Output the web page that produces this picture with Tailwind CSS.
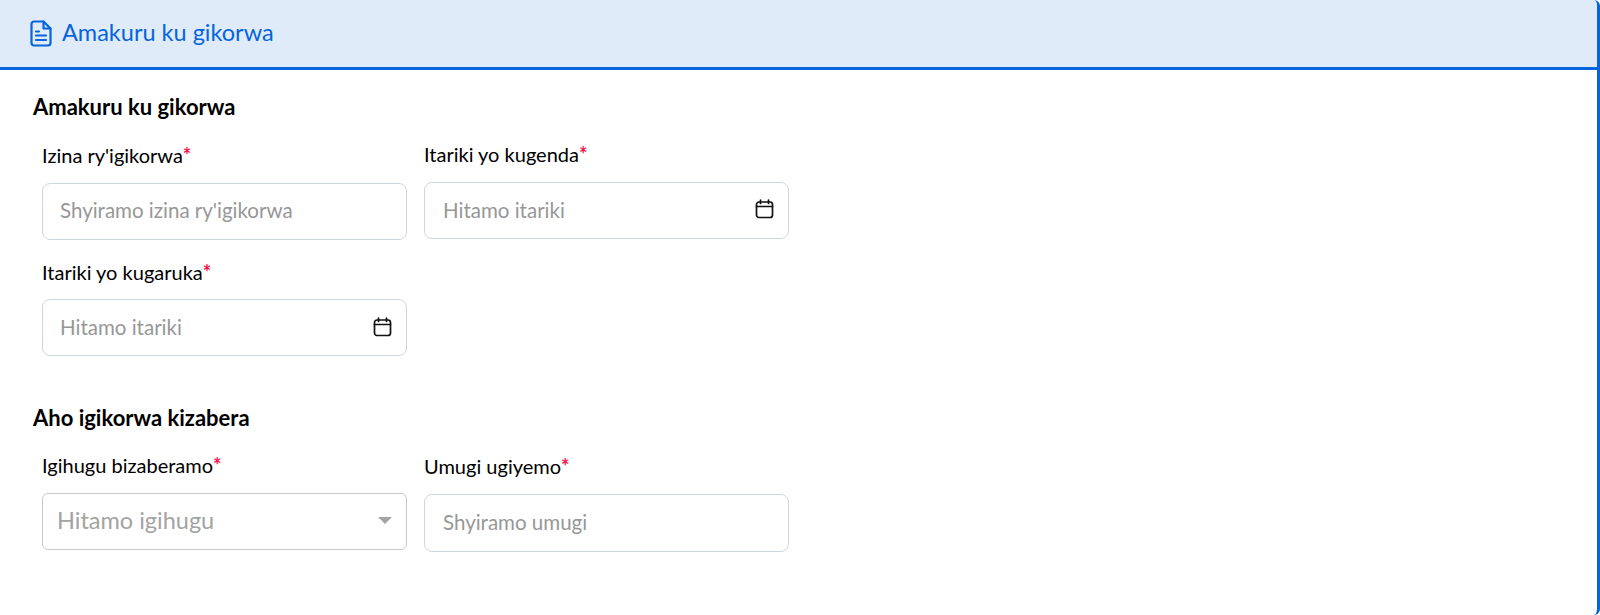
<!DOCTYPE html>
<html>
<head>
<meta charset="utf-8">
<script src="https://cdn.jsdelivr.net/npm/@tailwindcss/browser@4"></script>
</head>
<body class="bg-white font-['Lato',sans-serif] text-black overflow-hidden">
<div class="h-[615px] w-full border-r-[3px] border-[#0565dc] rounded-r-md overflow-hidden">
    <!-- Tab header -->
    <header class="h-[70px] bg-[#dfebf8] border-b-[3px] border-[#0565dc] flex items-center pl-[30px] pb-px">
        <svg class="w-[22px] h-[27px] mr-2.5" viewBox="0 0 22 27" fill="none" stroke="#0565dc" stroke-width="2.2" stroke-linecap="round" stroke-linejoin="round">
            <path d="M4 1.500h9.500l7 7V23a2.500 2.500 0 0 1-2.500 2.500H4A2.500 2.500 0 0 1 1.500 23V4A2.500 2.500 0 0 1 4 1.500z"/>
            <path d="M13.500 1.500V8.500h7"/>
            <path d="M6 11.500h3M6 15.500h10M6 20h10"/>
        </svg>
        <span class="text-[23.500px] text-[#0565dc]">Amakuru ku gikorwa</span>
    </header>

    <main class="pl-[33px]">
        <h2 class="pt-[26px] text-[22px] leading-[22px] font-bold">Amakuru ku gikorwa</h2>

        <div class="ml-[9px] mt-[25px] grid grid-cols-[365px_365px] gap-x-[17px] w-max">
            <div>
                <label class="block text-[20px] leading-[24px] mb-[16px]">Izina ry'igikorwa<span class="text-[#f5134b] font-bold">*</span></label>
                <input type="text" placeholder="Shyiramo izina ry'igikorwa" class="block w-full h-[57px] px-[17px] pb-[3px] text-[20.500px] border-[1.500px] border-[#cfd6e2] rounded-lg placeholder:text-[#979797]">
            </div>
            <div class="-mt-px">
                <label class="block text-[20px] leading-[24px] mb-[16px]">Itariki yo kugenda<span class="text-[#f5134b] font-bold">*</span></label>
                <div class="flex items-center justify-between h-[57px] px-[18px] border-[1.500px] border-[#cfd6e2] rounded-lg">
                    <span class="text-[20.500px] text-[#979797]">Hitamo itariki</span>
                    <svg class="w-[19px] h-[20px] -mt-1 -mr-[4px]" viewBox="0 0 19 20" fill="none" stroke="#111" stroke-width="1.700" stroke-linecap="round"><rect x="1.500" y="3" width="16" height="15.500" rx="2.500"/><path d="M1.500 7.500h16M5.500 1v3.500M13.500 1v3.500"/></svg>
                </div>
            </div>
            <div class="mt-[20px]">
                <label class="block text-[20px] leading-[24px] mb-[15px]">Itariki yo kugaruka<span class="text-[#f5134b] font-bold">*</span></label>
                <div class="flex items-center justify-between h-[57px] pl-[17px] pr-[18px] border-[1.500px] border-[#cfd6e2] rounded-lg">
                    <span class="text-[20.500px] text-[#979797]">Hitamo itariki</span>
                    <svg class="w-[19px] h-[20px] -mt-0.5 -mr-[4px]" viewBox="0 0 19 20" fill="none" stroke="#111" stroke-width="1.700" stroke-linecap="round"><rect x="1.500" y="3" width="16" height="15.500" rx="2.500"/><path d="M1.500 7.500h16M5.500 1v3.500M13.500 1v3.500"/></svg>
                </div>
            </div>
        </div>

        <h2 class="mt-[51px] text-[22px] leading-[22px] font-bold">Aho igikorwa kizabera</h2>

        <div class="ml-[9px] mt-[24px] grid grid-cols-[365px_365px] gap-x-[17px] w-max">
            <div>
                <label class="block text-[20px] leading-[24px] mb-[16px]">Igihugu bizaberamo<span class="text-[#f5134b] font-bold">*</span></label>
                <div class="flex items-center justify-between h-[57px] pl-[14px] pr-[14px] pb-[2px] border-[1.500px] border-[#c9c9c9] rounded-md">
                    <span class="text-[23.500px] text-[#a3a3a3]">Hitamo igihugu</span>
                    <span class="w-0 h-0 border-x-[7.500px] border-x-transparent border-t-[7px] border-t-[#a3a3a3]"></span>
                </div>
            </div>
            <div class="mt-px">
                <label class="block text-[20px] leading-[24px] mb-[16px]">Umugi ugiyemo<span class="text-[#f5134b] font-bold">*</span></label>
                <input type="text" placeholder="Shyiramo umugi" class="block w-full h-[58px] px-[18px] pb-[3px] text-[20.500px] border-[1.500px] border-[#cfd6e2] rounded-lg placeholder:text-[#979797]">
            </div>
        </div>
    </main>
</div>
</body>
</html>
